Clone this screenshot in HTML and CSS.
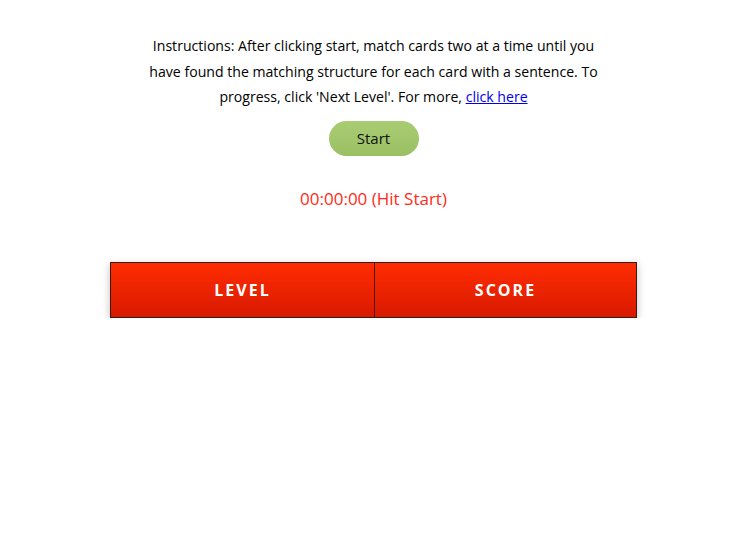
FILE: index.html
```html
<!DOCTYPE html>
<html>
<head>
<meta charset="utf-8">
<link rel="stylesheet" href="styles.css">
</head>
<body>
<div class="page">
  <p class="instructions">Instructions: After clicking start, match cards two at a time until you have found the matching structure for each card with a sentence. To progress, click 'Next Level'. For more, <a href="#">click here</a></p>
  <button class="start">Start</button>
  <div class="timer">00:00:00 (Hit Start)</div>
  <div class="board">
    <div class="cell">LEVEL</div>
    <div class="cell">SCORE</div>
  </div>
</div>
</body>
</html>
```
FILE: styles.css
```css
html, body { margin: 0; padding: 0; background: #fff; }
body { font-family: "Open Sans", "DejaVu Sans", sans-serif; color: #000; }
.page { display: flex; flex-direction: column; align-items: center; padding-top: 33px; }
.instructions { margin: 0; width: 470px; text-align: center; font-size: 14.1px; line-height: 25.5px; }
.instructions a { color: #0000ee; }
.start {
  margin-top: 11px; width: 90px; height: 35px; border: none; border-radius: 18px;
  background: linear-gradient(#a9cc73, #9bc063); font-family: inherit; font-size: 15px; color: #111;
  padding: 0;
}
.timer { margin-top: 32px; color: #ff2a1a; font-size: 17px; line-height: 22px; }
.board {
  margin-top: 52px; width: 525px; height: 54px; display: flex; border: 1px solid #3a1a14;
  box-shadow: 0 3px 8px rgba(0,0,0,0.25);
}
.cell {
  flex: 1; display: flex; align-items: center; justify-content: center;
  background: linear-gradient(#ff2c00, #d81a00); color: #fff; font-weight: bold;
  font-size: 16px; letter-spacing: 2px;
}
.cell:first-child { flex: 0 0 263px; }
.cell + .cell { border-left: 1px solid #4a1208; }
```
